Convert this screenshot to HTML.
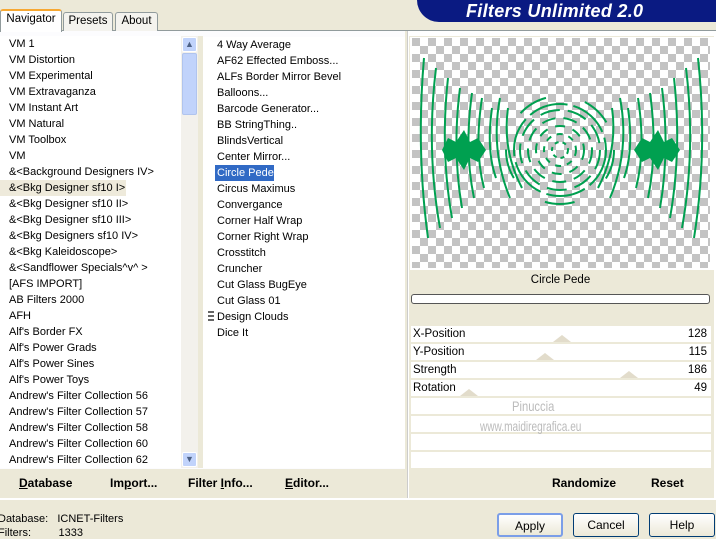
<!DOCTYPE html>
<html><head><style>
*{margin:0;padding:0;box-sizing:border-box}
body{width:716px;height:534px;background:#ece9d8;font-family:"Liberation Sans",Tahoma,sans-serif;font-size:11px;color:#000;position:relative;overflow:hidden}
.abs{position:absolute}
.tab{position:absolute;top:12px;height:19px;border:1px solid #919b9c;border-bottom:none;background:#f4f3ee;border-radius:3px 3px 0 0;text-align:center;line-height:17px;font-size:11.5px}
.list div{height:16px;line-height:16px;white-space:nowrap;font-size:11px}
.btn{position:absolute;top:513px;height:24px;border:1px solid #003c74;border-radius:3px;background:linear-gradient(#fff,#ece9d8);text-align:center;line-height:22px;font-size:12px}
.row{position:absolute;left:411px;width:300px;height:16px;background:#fff;line-height:16px;font-size:11.5px}
.row span{position:absolute;right:4px}
.row b{font-weight:normal;position:absolute;left:2px}
.tri{position:absolute;width:0;height:0;border-left:9px solid transparent;border-right:9px solid transparent;border-bottom:7px solid #e2dccb}
.bb{position:absolute;top:476px;font-weight:bold;font-size:12px}
</style></head><body>
<div class="abs" style="left:417px;top:0;width:299px;height:22px;background:#0a1a82;border-radius:0 0 0 22px"></div>
<div class="abs" style="left:466px;top:1px;color:#fff;font-weight:bold;font-style:italic;font-size:18px;letter-spacing:0.3px">Filters Unlimited 2.0</div>
<div class="abs" style="left:0;top:30px;width:716px;height:1px;background:#919b9c"></div>
<div class="tab" style="left:0;top:9px;width:62px;height:23px;background:#fff;border-top:2px solid #f7a832;z-index:2">Navigator</div>
<div class="tab" style="left:63px;width:50px">Presets</div>
<div class="tab" style="left:115px;width:43px">About</div>
<div class="abs" style="left:0;top:31px;width:716px;height:467px;background:#fcfcfe"></div>
<div class="abs list" style="left:0;top:36px;width:181px;height:432px;background:#fff;padding-left:9px">
<div>VM 1</div><div>VM Distortion</div><div>VM Experimental</div><div>VM Extravaganza</div><div>VM Instant Art</div><div>VM Natural</div><div>VM Toolbox</div><div>VM</div><div>&amp;&lt;Background Designers IV&gt;</div><div style="background:#eeeadb;margin-left:-9px;padding-left:9px;width:126px">&amp;&lt;Bkg Designer sf10 I&gt;</div><div>&amp;&lt;Bkg Designer sf10 II&gt;</div><div>&amp;&lt;Bkg Designer sf10 III&gt;</div><div>&amp;&lt;Bkg Designers sf10 IV&gt;</div><div>&amp;&lt;Bkg Kaleidoscope&gt;</div><div>&amp;&lt;Sandflower Specials^v^ &gt;</div><div>[AFS IMPORT]</div><div>AB Filters 2000</div><div>AFH</div><div>Alf's Border FX</div><div>Alf's Power Grads</div><div>Alf's Power Sines</div><div>Alf's Power Toys</div><div>Andrew's Filter Collection 56</div><div>Andrew's Filter Collection 57</div><div>Andrew's Filter Collection 58</div><div>Andrew's Filter Collection 60</div><div>Andrew's Filter Collection 62</div>
</div>
<div class="abs" style="left:181px;top:36px;width:17px;height:432px;background:#f3f1ec"></div>
<div class="abs" style="left:182px;top:37px;width:15px;height:15px;background:#c1d3fb;border:1px solid #fff;border-radius:2px;color:#4d6185;font-size:9px;text-align:center;line-height:13px">&#9650;</div>
<div class="abs" style="left:182px;top:53px;width:15px;height:62px;background:#c1d3fb;border:1px solid #b0c4ee;border-radius:2px"></div>
<div class="abs" style="left:182px;top:452px;width:15px;height:15px;background:#c1d3fb;border:1px solid #fff;border-radius:2px;color:#4d6185;font-size:9px;text-align:center;line-height:13px">&#9660;</div>
<div class="abs" style="left:198px;top:36px;width:5px;height:432px;background:#ece9d8"></div>
<div class="abs list" style="left:203px;top:37px;width:202px;height:431px;background:#fff;padding-left:14px">
<div>4 Way Average</div><div>AF62 Effected Emboss...</div><div>ALFs Border Mirror Bevel</div><div>Balloons...</div><div>Barcode Generator...</div><div>BB StringThing..</div><div>BlindsVertical</div><div>Center Mirror...</div><div style="background:#316ac5;color:#fff;margin-left:-2px;padding-left:2px;width:59px">Circle Pede</div><div>Circus Maximus</div><div>Convergance</div><div>Corner Half Wrap</div><div>Corner Right Wrap</div><div>Crosstitch</div><div>Cruncher</div><div>Cut Glass  BugEye</div><div>Cut Glass 01</div><div>Design Clouds</div><div>Dice It</div>
</div>
<div class="abs" style="left:208px;top:311px;width:6px;height:12px;background:repeating-linear-gradient(#666 0 2px,#fff 2px 4px)"></div>
<div class="abs" style="left:405px;top:31px;width:2px;height:467px;background:#ece9d8"></div>
<div class="abs" style="left:407px;top:31px;width:309px;height:467px;background:#fff;border-left:1px solid #ccc"></div>
<div class="abs" style="left:409px;top:36px;width:305px;height:462px;background:#ece9d8"></div>
<div class="abs" style="left:410px;top:37px;width:304px;height:233px;background:#fff"></div>
<svg class="abs" style="left:412px;top:38px" width="298" height="230">
<defs><pattern id="c" width="16" height="16" patternUnits="userSpaceOnUse"><rect width="16" height="16" fill="#fff"/><rect width="8" height="8" fill="#c3c3c3"/><rect x="8" y="8" width="8" height="8" fill="#c3c3c3"/></pattern></defs>
<rect width="298" height="230" fill="url(#c)"/>
<g fill="none" stroke="#00a050" stroke-width="2">
<circle cx="148" cy="112" r="46" stroke-dasharray="40 6"/>
<circle cx="148" cy="112" r="40" stroke-dasharray="20 8"/>
<circle cx="148" cy="112" r="32" stroke-dasharray="14 8"/>
<circle cx="148" cy="112" r="24" stroke-dasharray="10 8"/>
<circle cx="148" cy="112" r="16" stroke-dasharray="6 6"/>
<circle cx="148" cy="112" r="8" stroke-dasharray="4 4"/>
<circle cx="148" cy="112" r="54" stroke-dasharray="30 40"/>
<path d="M96 70 Q90 112 110 150 M88 60 Q78 112 98 160 M200 70 Q206 112 186 150 M208 60 Q218 112 198 160"/>
<path d="M80 70 Q74 112 84 140 M70 60 Q62 112 72 150 M60 55 Q52 112 62 160 M48 50 Q40 112 50 170 M36 40 Q28 112 40 180 M24 30 Q14 112 28 190 M12 20 Q4 112 16 200"/>
<path d="M216 70 Q222 112 212 140 M226 60 Q234 112 224 150 M238 55 Q246 112 236 160 M250 50 Q258 112 248 170 M262 40 Q270 112 258 180 M274 30 Q284 112 270 190 M286 20 Q296 112 282 200"/>
</g>
<path d="M30 112 L36 100 L44 104 L52 92 L58 104 L66 100 L74 112 L66 124 L58 120 L52 132 L44 120 L36 124Z M222 112 L230 100 L238 104 L246 92 L252 104 L260 100 L268 112 L260 124 L252 120 L246 132 L238 120 L230 124Z" fill="#00a050"/>
</svg>
<div class="abs" style="left:410px;top:274px;width:301px;text-align:center;font-size:11.5px">Circle Pede</div>
<div class="abs" style="left:411px;top:294px;width:299px;height:10px;background:#fff;border:1px solid #555;border-radius:3px"></div>
<div class="row" style="top:326px"><b>X-Position</b><span>128</span></div>
<div class="row" style="top:344px"><b>Y-Position</b><span>115</span></div>
<div class="row" style="top:362px"><b>Strength</b><span>186</span></div>
<div class="row" style="top:380px"><b>Rotation</b><span>49</span></div>
<div class="row" style="top:398px"></div>
<div class="row" style="top:416px"></div>
<div class="row" style="top:434px"></div>
<div class="row" style="top:452px"></div>
<div class="tri" style="left:553px;top:335px"></div>
<div class="tri" style="left:536px;top:353px"></div>
<div class="tri" style="left:620px;top:371px"></div>
<div class="tri" style="left:460px;top:389px"></div>
<div class="abs" style="left:512px;top:398px;color:#bbb;font-size:14px;transform:scaleX(0.8);transform-origin:left">Pinuccia</div>
<div class="abs" style="left:480px;top:418px;color:#bbb;font-size:14px;transform:scaleX(0.72);transform-origin:left">www.maidiregrafica.eu</div>
<div class="abs" style="left:0;top:469px;width:405px;height:29px;background:#ece9d8"></div>
<div class="bb" style="left:19px"><u>D</u>atabase</div>
<div class="bb" style="left:110px">Im<u>p</u>ort...</div>
<div class="bb" style="left:188px">Filter <u>I</u>nfo...</div>
<div class="bb" style="left:285px"><u>E</u>ditor...</div>
<div class="bb" style="left:552px">Randomize</div>
<div class="bb" style="left:651px">Reset</div>
<div class="abs" style="left:0;top:498px;width:716px;height:2px;background:#fff"></div>
<div class="abs" style="left:-2px;top:513px;font-size:11px">Database:&nbsp;&nbsp; ICNET-Filters</div>
<div class="abs" style="left:-2px;top:527px;font-size:11px">Filters:&nbsp;&nbsp;&nbsp;&nbsp;&nbsp;&nbsp;&nbsp;&nbsp; 1333</div>
<div class="btn" style="left:497px;width:66px;border:2px solid #7b9ee8">Apply</div>
<div class="btn" style="left:573px;width:66px">Cancel</div>
<div class="btn" style="left:649px;width:66px">Help</div>
</body></html>
